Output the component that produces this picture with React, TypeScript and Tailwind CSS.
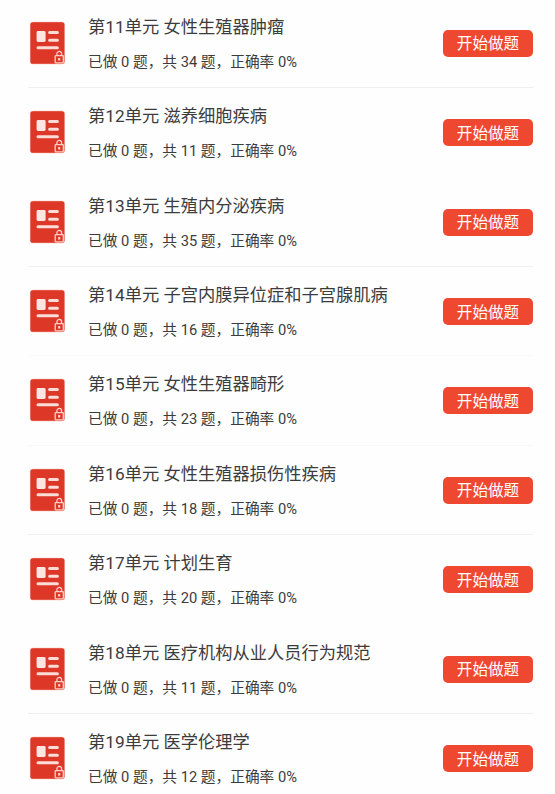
import React from 'react';

interface Unit {
  id: number;
  name: string;
  done: number;
  total: number;
  accuracy: number;
  divider: string;
}

const units: Unit[] = [
  { id: 11, name: '女性生殖器肿瘤', done: 0, total: 34, accuracy: 0, divider: 'bg-[#eeeeee]' },
  { id: 12, name: '滋养细胞疾病', done: 0, total: 11, accuracy: 0, divider: 'bg-transparent' },
  { id: 13, name: '生殖内分泌疾病', done: 0, total: 35, accuracy: 0, divider: 'bg-[#f1f1f1]' },
  { id: 14, name: '子宫内膜异位症和子宫腺肌病', done: 0, total: 16, accuracy: 0, divider: 'bg-[#fafafa]' },
  { id: 15, name: '女性生殖器畸形', done: 0, total: 23, accuracy: 0, divider: 'bg-[#f8f8f8]' },
  { id: 16, name: '女性生殖器损伤性疾病', done: 0, total: 18, accuracy: 0, divider: 'bg-[#f1f1f1]' },
  { id: 17, name: '计划生育', done: 0, total: 20, accuracy: 0, divider: 'bg-transparent' },
  { id: 18, name: '医疗机构从业人员行为规范', done: 0, total: 11, accuracy: 0, divider: 'bg-[#eeeeee]' },
  { id: 19, name: '医学伦理学', done: 0, total: 12, accuracy: 0, divider: 'bg-transparent' },
];

const LockedPaperIcon: React.FC = () => (
  <svg className="w-[37px] h-[44px] shrink-0" viewBox="0 0 37 44" fill="none">
    <rect x="0.9" y="0.7" width="35" height="42.6" rx="3" fill="#f6bdb3" />
    <rect x="1.4" y="1.2" width="34" height="41.6" rx="2.6" fill="#dd3727" />
    <rect x="7.6" y="10.1" width="9" height="10.9" rx="1.4" fill="#fde6e1" />
    <path d="M20.6 11.6h7.8M20.6 19.2h7.8M9 26.7h19.4" stroke="#fbdcd6" strokeWidth="3" strokeLinecap="round" />
    <rect x="26.2" y="34.6" width="8.1" height="7.2" rx="0.5" stroke="#fbd0c7" strokeWidth="1.3" />
    <path d="M27.9 34.4v-1.6a2.35 2.35 0 0 1 4.7 0v1.6" stroke="#fbd0c7" strokeWidth="1.3" />
    <rect x="29.2" y="37.1" width="2" height="2.4" fill="#fde6e1" />
  </svg>
);

const UnitRow: React.FC<{ unit: Unit }> = ({ unit }) => (
  <li className="h-[89.45px] flex flex-col pl-[28px] pr-[22px]">
    <div className="flex-1 flex items-center pl-px">
      <LockedPaperIcon />
      <div className="flex-1 ml-[22px] pt-px whitespace-nowrap text-[#3c3c3c]">
        <h2 className="text-[17.25px] leading-[24px]">第{unit.id}单元 {unit.name}</h2>
        <p className="mt-[13px] text-[14.7px] leading-[20px]">
          已做 {unit.done} 题，共 {unit.total} 题，正确率 {unit.accuracy}%
        </p>
      </div>
      <button className="w-[90px] h-[27px] mt-px pt-[2.5px] shrink-0 rounded-[5px] bg-[#ef4830] text-white text-[15.6px] leading-[24.5px] text-center">
        开始做题
      </button>
    </div>
    <div className={`h-px shrink-0 ${unit.divider}`}></div>
  </li>
);

const App: React.FC = () => {
  return (
    <div className="h-[794px] overflow-hidden bg-[#fefefe] font-[Roboto,'Noto_Sans_CJK_SC',sans-serif]">
      <ul lang="zh-CN" className="-mt-[1.5px]">
        {units.map(unit => (
          <UnitRow key={unit.id} unit={unit} />
        ))}
      </ul>
    </div>
  );
};

export default App;
